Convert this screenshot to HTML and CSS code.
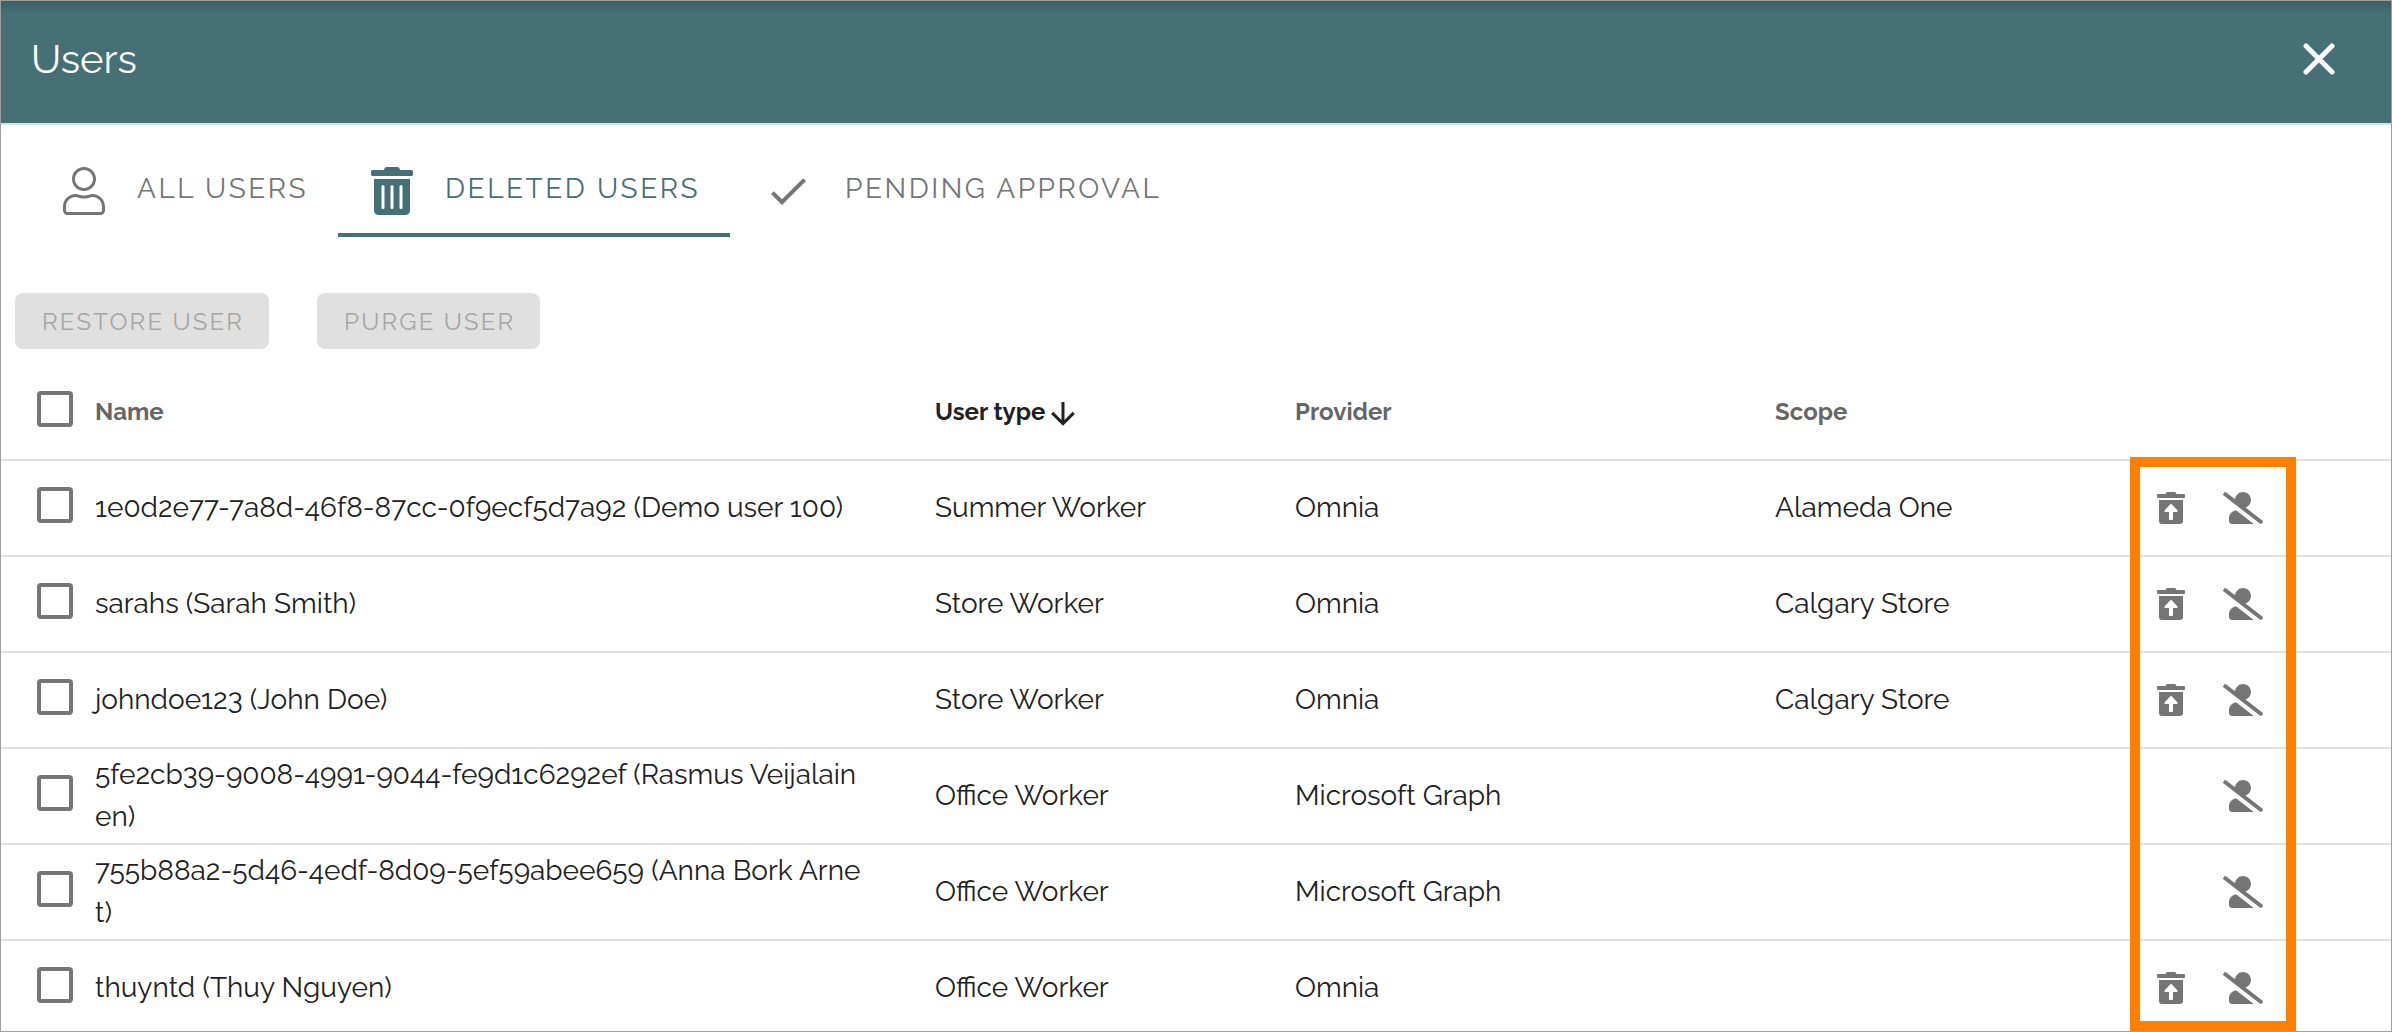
FILE: index.html
```html
<!DOCTYPE html>
<html lang="en">
<head>
<meta charset="utf-8">
<meta name="viewport" content="width=device-width, initial-scale=1">
<title>Users</title>
<link rel="stylesheet" href="styles.css">
</head>
<body>
<svg class="sprite" aria-hidden="true">
  <symbol id="trash" viewBox="0 0 448 512"><path d="M32 464a48 48 0 0 0 48 48h288a48 48 0 0 0 48-48V128H32zm272-256a16 16 0 0 1 32 0v224a16 16 0 0 1-32 0zm-96 0a16 16 0 0 1 32 0v224a16 16 0 0 1-32 0zm-96 0a16 16 0 0 1 32 0v224a16 16 0 0 1-32 0zM432 32H312l-9.400-18.700A24 24 0 0 0 281.100 0H166.800a23.720 23.720 0 0 0-21.400 13.300L136 32H16A16 16 0 0 0 0 48v32a16 16 0 0 0 16 16h416a16 16 0 0 0 16-16V48a16 16 0 0 0-16-16z"/></symbol>
  <symbol id="user" viewBox="0 0 448 512"><path d="M313.600 288c-28.700 0-42.500 16-89.600 16-47.100 0-60.800-16-89.600-16C60.200 288 0 348.200 0 422.400V464c0 26.500 21.500 48 48 48h352c26.500 0 48-21.500 48-48v-41.600c0-74.200-60.200-134.400-134.400-134.400zM416 464c0 8.800-7.200 16-16 16H48c-8.800 0-16-7.200-16-16v-41.600C32 365.900 77.900 320 134.400 320c19.600 0 39.100 16 89.600 16 50.400 0 70-16 89.600-16 56.500 0 102.400 45.900 102.400 102.400V464zM224 256c70.700 0 128-57.300 128-128S294.700 0 224 0 96 57.300 96 128s57.300 128 128 128zm0-224c52.900 0 96 43.100 96 96s-43.100 96-96 96-96-43.100-96-96 43.100-96 96-96z"/></symbol>
  <symbol id="check" viewBox="0 0 24 24"><path d="M21 7L9 19l-5.500-5.500 1.410-1.410L9 16.170 19.590 5.590z"/></symbol>
  <symbol id="arrow" viewBox="0 0 24 24"><path d="M11 4h2v12l5.500-5.500 1.420 1.420L12 19.840l-7.920-7.920L5.500 10.500 11 16z"/></symbol>
  <symbol id="restore" viewBox="0 0 448 512"><path d="M32 464a48 48 0 0 0 48 48h288a48 48 0 0 0 48-48V128H32zm91.310-172.800l89.380-94.260a15.410 15.410 0 0 1 22.620 0l89.380 94.260c10.080 10.620 2.940 28.800-11.320 28.800H256v112a16 16 0 0 1-16 16h-32a16 16 0 0 1-16-16V320h-57.370c-14.260 0-21.400-18.180-11.320-28.800zM432 32H312l-9.400-18.700A24 24 0 0 0 281.100 0H166.800a23.720 23.720 0 0 0-21.400 13.300L136 32H16A16 16 0 0 0 0 48v32a16 16 0 0 0 16 16h416a16 16 0 0 0 16-16V48a16 16 0 0 0-16-16z"/></symbol>
  <symbol id="purge" viewBox="0 0 640 512"><path d="M633.800 458.100L362.300 248.300C412.100 230.700 448 183.800 448 128 448 57.300 390.700 0 320 0c-67.100 0-121.500 51.800-126.900 117.400L45.500 3.400C38.500-2 28.500-.8 23 6.200L3.400 31.400c-5.400 7-4.200 17 2.800 22.400l588.400 454.700c7 5.500 17 4.200 22.500-2.800l19.600-25.300c5.400-6.800 4.100-16.900-2.900-22.300zM96 422.400V464c0 26.500 21.500 48 48 48h350.200L207.400 290.300C144.200 301.300 96 356 96 422.400z"/></symbol>
</svg>
<main class="panel">
  <header class="panel-header">
    <h1 class="title">Users</h1>
    <button class="close" type="button" aria-label="Close"><svg class="icon-close" viewBox="0 0 32 32"><path d="M3 3l26 26M29 3L3 29"/></svg></button>
  </header>
  <nav class="tabs" aria-label="User lists">
    <button class="tab" type="button"><svg class="icon-tab"><use href="#user"/></svg><span class="tab-label">ALL USERS</span></button>
    <button class="tab tab-active" type="button" aria-current="page"><svg class="icon-tab"><use href="#trash"/></svg><span class="tab-label">DELETED USERS</span></button>
    <button class="tab" type="button"><svg class="icon-tab icon-check"><use href="#check"/></svg><span class="tab-label">PENDING APPROVAL</span></button>
  </nav>
  <div class="actions">
    <button class="action" type="button" disabled>RESTORE USER</button>
    <button class="action" type="button" disabled>PURGE USER</button>
  </div>
  <div class="list">
  <table class="users">
    <colgroup><col class="col-check"><col class="col-name"><col class="col-type"><col class="col-provider"><col class="col-scope"><col class="col-tools"></colgroup>
    <thead>
      <tr><th><input class="check" type="checkbox" aria-label="Select all"></th><th scope="col">Name</th><th scope="col" class="sorted" aria-sort="descending"><span class="sort">User type<svg class="icon-sort"><use href="#arrow"/></svg></span></th><th scope="col">Provider</th><th scope="col">Scope</th><th></th></tr>
    </thead>
    <tbody>
      <tr><td><input class="check" type="checkbox" id="u1"></td><td><label class="name" for="u1">1e0d2e77-7a8d-46f8-87cc-0f9ecf5d7a92 (Demo user 100)</label></td><td>Summer Worker</td><td>Omnia</td><td>Alameda One</td><td><div class="tools"><button class="tool" type="button" aria-label="Restore"><svg class="icon-restore"><use href="#restore"/></svg></button><button class="tool" type="button" aria-label="Purge"><svg class="icon-purge"><use href="#purge"/></svg></button></div></td></tr>
      <tr><td><input class="check" type="checkbox" id="u2"></td><td><label class="name" for="u2">sarahs (Sarah Smith)</label></td><td>Store Worker</td><td>Omnia</td><td>Calgary Store</td><td><div class="tools"><button class="tool" type="button" aria-label="Restore"><svg class="icon-restore"><use href="#restore"/></svg></button><button class="tool" type="button" aria-label="Purge"><svg class="icon-purge"><use href="#purge"/></svg></button></div></td></tr>
      <tr><td><input class="check" type="checkbox" id="u3"></td><td><label class="name" for="u3">johndoe123 (John Doe)</label></td><td>Store Worker</td><td>Omnia</td><td>Calgary Store</td><td><div class="tools"><button class="tool" type="button" aria-label="Restore"><svg class="icon-restore"><use href="#restore"/></svg></button><button class="tool" type="button" aria-label="Purge"><svg class="icon-purge"><use href="#purge"/></svg></button></div></td></tr>
      <tr><td><input class="check" type="checkbox" id="u4"></td><td><label class="name" for="u4">5fe2cb39-9008-4991-9044-fe9d1c6292ef (Rasmus Veijalainen)</label></td><td>Office Worker</td><td>Microsoft Graph</td><td></td><td><div class="tools"><button class="tool" type="button" aria-label="Purge"><svg class="icon-purge"><use href="#purge"/></svg></button></div></td></tr>
      <tr><td><input class="check" type="checkbox" id="u5"></td><td><label class="name" for="u5">755b88a2-5d46-4edf-8d09-5ef59abee659 (Anna Bork Arnet)</label></td><td>Office Worker</td><td>Microsoft Graph</td><td></td><td><div class="tools"><button class="tool" type="button" aria-label="Purge"><svg class="icon-purge"><use href="#purge"/></svg></button></div></td></tr>
      <tr><td><input class="check" type="checkbox" id="u6"></td><td><label class="name" for="u6">thuyntd (Thuy Nguyen)</label></td><td>Office Worker</td><td>Omnia</td><td></td><td><div class="tools"><button class="tool" type="button" aria-label="Restore"><svg class="icon-restore"><use href="#restore"/></svg></button><button class="tool" type="button" aria-label="Purge"><svg class="icon-purge"><use href="#purge"/></svg></button></div></td></tr>
    </tbody>
  </table>
  <div class="highlight"></div>
  </div>
</main>
</body>
</html>
```
FILE: styles.css
```css
* { box-sizing: border-box; }
body { margin: 0; background: #fff; color: #212121; font: 28px/42px Raleway, Lato, sans-serif; font-feature-settings: "calt" 0, "onum" 1; }
button { font: inherit; color: inherit; background: none; border: 0; padding: 0; }
svg { display: block; fill: currentColor; flex: none; }
.sprite { position: absolute; width: 0; height: 0; }
.panel { display: flex; flex-direction: column; border: 1px solid #9e9e9e; height: 100vh; }
.panel-header { display: flex; flex: none; align-items: center; justify-content: space-between; height: 124px; padding: 0 56px 6px 30px; color: #fff; background: linear-gradient(#3a5f61, #457075 12px); border-bottom: 2px solid #e0e0e0; }
.title { margin: 0; font-size: 40px; line-height: 56px; font-weight: 400; }
.icon-close { width: 32px; height: 32px; stroke: #fff; stroke-width: 5; stroke-linecap: round; }
.tabs { display: flex; flex: none; padding: 16px 0 0 29px; color: #757575; }
.tab { display: flex; align-items: center; gap: 29px; height: 96px; padding: 8px 30px 0; letter-spacing: 0.09em; border-bottom: 4px solid transparent; }
.tab-active { color: #457075; border-color: #457075; }
.tab-label { padding-bottom: 4px; }
.icon-tab { width: 48px; height: 48px; }
.icon-check { width: 56px; }
.actions { display: flex; flex: none; gap: 48px; padding: 56px 14px 0; }
.action { height: 56px; padding: 1px 25px 0 27px; border-radius: 8px; background: #e0e0e0; color: #a6a6a6; font-size: 24px; letter-spacing: 0.09em; }
.list { position: relative; flex: 1; min-height: 0; overflow: hidden; padding-top: 16px; }
.users { width: 100%; table-layout: fixed; border-collapse: separate; border-spacing: 0; text-align: left; }
.col-check { width: 94px; }
.col-name { width: 840px; }
.col-type { width: 360px; }
.col-provider { width: 480px; }
.col-scope { width: 346px; }
th, td { height: 96px; padding: 0; vertical-align: middle; border-bottom: 2px solid #e0e0e0; }
th { color: #666; font-size: 24px; font-weight: 700; }
.name { display: block; max-width: 768px; word-break: break-all; }
.sorted { color: #212121; }
.sort { display: flex; align-items: center; }
.icon-sort { width: 36px; height: 36px; margin-top: 4px; }
.check { appearance: none; display: block; width: 36px; height: 36px; margin: 0 0 6px 36px; border: 4px solid #757575; border-radius: 4px; }
.tools { display: flex; justify-content: flex-end; gap: 38px; width: 142px; color: #757575; }
.icon-restore { width: 28px; height: 32px; }
.icon-purge { width: 40px; height: 32px; }
.highlight { position: absolute; top: 108px; bottom: 0; right: 95px; width: 166px; border: 10px solid #ff8000; pointer-events: none; }
```
